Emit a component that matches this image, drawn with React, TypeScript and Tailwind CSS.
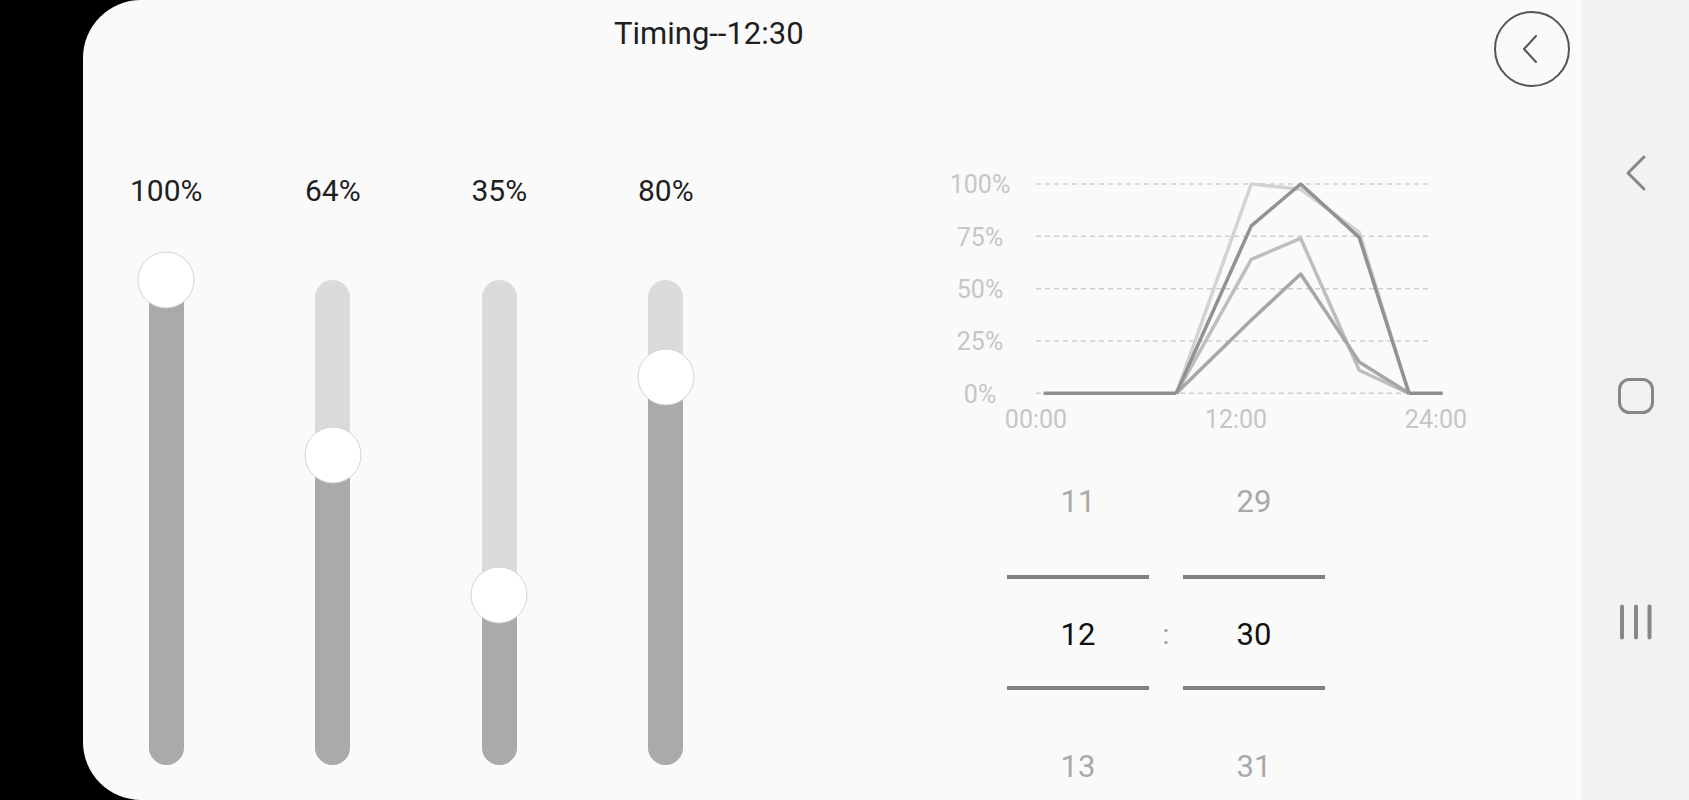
import React from "react";

const font = { fontFamily: "Roboto, 'Noto Sans', sans-serif" };

const sliders = [100, 64, 35, 80];
const TRACK_H = 485;

const xs = [236.3, 311.3, 360.7, 419.2, 469];
const yOf = (v: number) => 233.3 - v * 2.093;

const series = [
  { color: "#d3d3d3", values: [0, 100, 97.5, 77, 0] },
  { color: "#bebebe", values: [0, 64, 74, 11, 0] },
  { color: "#a6a6a6", values: [0, 35, 57, 15, 0] },
  { color: "#929292", values: [0, 80, 100, 74.5, 0] },
];

function Slider({ value }: { value: number }) {
  const top = (1 - value / 100) * TRACK_H;
  return (
    <div className="flex flex-col items-center">
      <div className="mt-[86px] h-[36px] text-[30px] leading-[36px] text-[#1f1f1f]">{value}%</div>
      <div className="relative mt-[71px] h-[485px] w-[35px]">
        <div className="relative h-full w-full overflow-hidden rounded-full bg-[#dbdbdb]">
          <div className="absolute bottom-0 left-0 w-full bg-[#aaaaaa]" style={{ height: TRACK_H - top }} />
        </div>
        <div
          className="absolute left-1/2 h-[57px] w-[57px] -translate-x-1/2 -translate-y-1/2 rounded-full border-[1.5px] border-[#d4d4d4] bg-white"
          style={{ top }}
        />
      </div>
    </div>
  );
}

function Chart() {
  const grid = [100, 75, 50, 25, 0];
  return (
    <svg width="540" height="280" viewBox="0 0 540 280" className="block">
      {grid.map((g) => (
        <g key={g}>
          <line x1="96" x2="491" y1={yOf(g)} y2={yOf(g)} stroke="#cfcfcf" strokeWidth="1.5" strokeDasharray="5 4" />
          <text x="40" y={yOf(g) + 9.3} textAnchor="middle" fontSize="25" fill="#c6c6c6" fontFamily="Roboto, sans-serif">
            {g}%
          </text>
        </g>
      ))}
      {series.map((s) => (
        <polyline
          key={s.color}
          points={xs.map((x, i) => `${x},${yOf(s.values[i])}`).join(" ")}
          fill="none"
          stroke={s.color}
          strokeWidth="3.5"
          strokeLinejoin="round"
        />
      ))}
      <line x1="103.5" x2="236.3" y1={yOf(0)} y2={yOf(0)} stroke="#8f8f8f" strokeWidth="3.5" />
      <line x1="469" x2="502.7" y1={yOf(0)} y2={yOf(0)} stroke="#8f8f8f" strokeWidth="3.5" />
      {[
        ["00:00", 96],
        ["12:00", 296],
        ["24:00", 496],
      ].map(([t, x]) => (
        <text key={t} x={x} y="268.3" textAnchor="middle" fontSize="25" fill="#c6c6c6" fontFamily="Roboto, sans-serif">
          {t}
        </text>
      ))}
    </svg>
  );
}

function PickerColumn({ prev, cur, next }: { prev: string; cur: string; next: string }) {
  return (
    <div className="flex w-[142px] flex-col items-center text-[31px] leading-[36px]">
      <div className="h-[36px] text-[#a9a9a9]">{prev}</div>
      <div className="mt-[55px] h-[4px] w-full bg-[#808080]" />
      <div className="mt-[38px] h-[36px] text-[#111]">{cur}</div>
      <div className="mt-[33px] h-[4px] w-full bg-[#808080]" />
      <div className="mt-[59px] h-[36px] text-[#a9a9a9]">{next}</div>
    </div>
  );
}

export default function App() {
  return (
    <div className="flex h-[800px] w-[1689px] overflow-hidden bg-black" style={font}>
      <div className="w-[83px] shrink-0" />
      <div className="flex w-[1499px] shrink-0 flex-col overflow-hidden rounded-l-[58px] bg-[#fafafa]">
        <div className="flex items-start pt-[11px]">
          <div className="ml-[531px] mt-[5px] h-[36px] text-[31px] leading-[36px] text-[#1f1f1f]">Timing--12:30</div>
          <button className="ml-auto mr-[12px] flex h-[76px] w-[76px] items-center justify-center rounded-full border-2 border-[#555]">
            <svg width="20" height="32" viewBox="0 0 20 32" fill="none">
              <path d="M14 3 L2 16 L14 29" stroke="#555" strokeWidth="2" strokeLinecap="round" strokeLinejoin="round" />
            </svg>
          </button>
        </div>
        <div className="flex">
          <div className="grid w-[666px] grid-cols-4">
            {sliders.map((v, i) => (
              <Slider key={i} value={v} />
            ))}
          </div>
          <div className="ml-[191px] flex flex-col">
            <div className="mt-[73px]">
              <Chart />
            </div>
            <div className="ml-[67px] mt-[44px] flex">
              <PickerColumn prev="11" cur="12" next="13" />
              <div className="flex w-[34px] justify-center pt-[133px] text-[28px] leading-[36px] text-[#999]">:</div>
              <PickerColumn prev="29" cur="30" next="31" />
            </div>
          </div>
        </div>
      </div>
      <div className="flex w-[107px] shrink-0 flex-col items-center bg-[#f2f2f2] pt-[154px]">
        <svg width="24" height="38" viewBox="0 0 24 38" fill="none">
          <path d="M20 3 L4 19 L20 35" stroke="#878787" strokeWidth="3" strokeLinecap="round" strokeLinejoin="round" />
        </svg>
        <svg width="40" height="40" viewBox="0 0 40 40" fill="none" className="mt-[184px]">
          <rect x="3.5" y="3.5" width="33" height="33" rx="10" stroke="#878787" strokeWidth="3" />
        </svg>
        <svg width="36" height="38" viewBox="0 0 36 38" fill="none" className="mt-[187px]">
          <path d="M4 3.5 V34.5 M18 3.5 V34.5 M31.5 3.5 V34.5" stroke="#878787" strokeWidth="4" strokeLinecap="round" />
        </svg>
      </div>
    </div>
  );
}
